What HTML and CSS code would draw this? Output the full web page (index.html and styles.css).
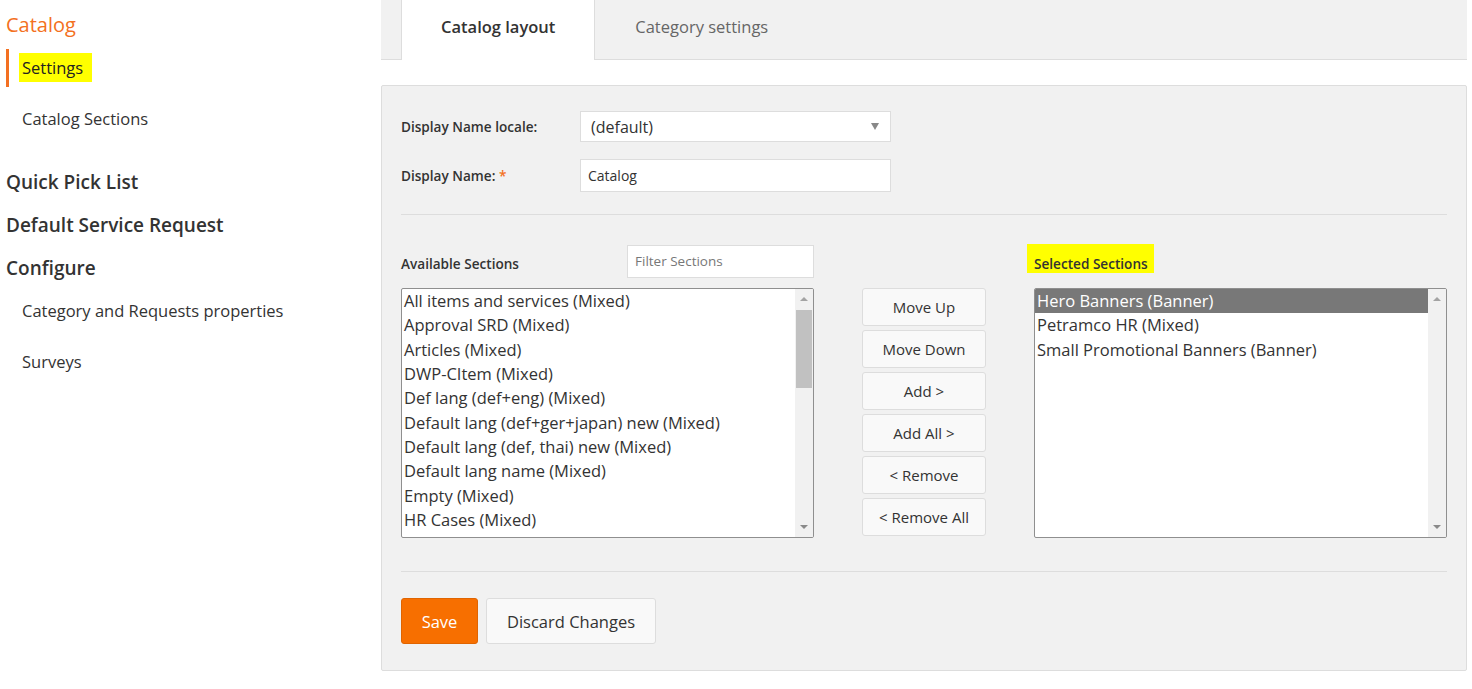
FILE: index.html
```html
<!DOCTYPE html>
<html>
<head>
  <title>Catalog Settings</title>
  <link rel="stylesheet" href="styles.css">
</head>
<body>
  <div class="page">
    <div class="sidebar">
      <div class="nav-group">
        <div class="nav-title current">Catalog</div>
        <div class="nav-list">
          <div class="nav-item active"><span class="marker">Settings</span></div>
          <div class="nav-item">Catalog Sections</div>
        </div>
      </div>
      <div class="nav-group">
        <div class="nav-title">Quick Pick List</div>
      </div>
      <div class="nav-group">
        <div class="nav-title">Default Service Request</div>
      </div>
      <div class="nav-group">
        <div class="nav-title">Configure</div>
        <div class="nav-list">
          <div class="nav-item">Category and Requests properties</div>
          <div class="nav-item">Surveys</div>
        </div>
      </div>
    </div>

    <div class="main">
      <div class="tabs">
        <div class="tab active">Catalog layout</div>
        <div class="tab">Category settings</div>
      </div>

      <div class="panel">
        <div class="form-row">
          <label class="form-label">Display Name locale:</label>
          <div class="select">
            <span>(default)</span>
            <span class="caret"></span>
          </div>
        </div>
        <div class="form-row">
          <label class="form-label">Display Name: <span class="req">*</span></label>
          <div class="text-input">Catalog</div>
        </div>

        <div class="divider"></div>

        <div class="sections">
          <div class="section-head">
            <label class="form-label">Available Sections</label>
            <div class="filter">Filter Sections</div>
          </div>
          <div></div>
          <div class="section-head">
            <label class="form-label"><span class="marker-label">Selected Sections</span></label>
          </div>

          <div class="listbox">
            <ul class="options">
              <li>All items and services (Mixed)</li>
              <li>Approval SRD (Mixed)</li>
              <li>Articles (Mixed)</li>
              <li>DWP-CItem (Mixed)</li>
              <li>Def lang (def+eng) (Mixed)</li>
              <li>Default lang (def+ger+japan) new (Mixed)</li>
              <li>Default lang (def, thai) new (Mixed)</li>
              <li>Default lang name (Mixed)</li>
              <li>Empty (Mixed)</li>
              <li>HR Cases (Mixed)</li>
            </ul>
            <div class="scrollbar">
              <span class="arrow up"></span>
              <span class="thumb"></span>
              <span class="arrow down"></span>
            </div>
          </div>

          <div class="actions">
            <button class="btn-small">Move Up</button>
            <button class="btn-small">Move Down</button>
            <button class="btn-small">Add &gt;</button>
            <button class="btn-small">Add All &gt;</button>
            <button class="btn-small">&lt; Remove</button>
            <button class="btn-small">&lt; Remove All</button>
          </div>

          <div class="listbox">
            <ul class="options">
              <li class="selected">Hero Banners (Banner)</li>
              <li>Petramco HR (Mixed)</li>
              <li>Small Promotional Banners (Banner)</li>
            </ul>
            <div class="scrollbar">
              <span class="arrow up"></span>
              <span class="arrow down"></span>
            </div>
          </div>
        </div>

        <div class="divider bottom"></div>

        <div class="footer">
          <button class="btn-primary">Save</button>
          <button class="btn-default">Discard Changes</button>
        </div>
      </div>
    </div>
  </div>
</body>
</html>
```

FILE: styles.css
```css
body {
  margin: 0;
  font-family: "Open Sans", "Liberation Sans", sans-serif;
  color: #333;
  background-color: #fff;
}

.page {
  display: flex;
}

/* left navigation */
.sidebar {
  width: 375px;
  padding: 10px 0 0 6px;
  flex-shrink: 0;
}

.nav-group + .nav-group {
  margin-top: 13px;
}

.nav-title {
  font-size: 19px;
  font-weight: 600;
  line-height: 30px;
  color: #333;
}

.nav-title.current {
  font-size: 20px;
  color: #f37021;
  font-weight: 500;
}

.nav-list {
  padding: 9px 0 16px;
}

.nav-item {
  height: 38px;
  line-height: 38px;
  font-size: 16.5px;
  padding-left: 16px;
  color: #333;
}

.nav-item + .nav-item {
  margin-top: 13px;
}

.nav-item.active {
  border-left: 3px solid #f37021;
  padding-left: 13px;
  font-weight: 500;
  color: #222;
}

.marker {
  background-color: #ffff00;
  padding: 3px 9px 3px 3px;
  margin-left: -3px;
}

/* main area */
.main {
  flex: 1;
  margin-right: 5px;
}

.tabs {
  display: flex;
  height: 59px;
  padding-left: 20px;
  background-color: #f1f1f1;
  border-bottom: 1px solid #ddd;
}

.tab {
  padding: 0 40px;
  line-height: 54px;
  font-size: 16.5px;
  color: #666;
}

.tab.active {
  height: 60px;
  background-color: #fff;
  border-left: 1px solid #ddd;
  border-right: 1px solid #ddd;
  padding: 0 39px;
  font-weight: 600;
  color: #333;
}

.panel {
  margin-top: 25px;
  background-color: #f1f1f1;
  border: 1px solid #ddd;
  border-radius: 2px;
  padding: 25px 19px 26px;
}

.form-row {
  display: flex;
  align-items: center;
}

.form-row + .form-row {
  margin-top: 17px;
}

.form-label {
  font-size: 13.6px;
  font-weight: 600;
  color: #333;
}

.form-row .form-label {
  width: 179px;
}

.req {
  color: #f37021;
}

.select {
  width: 289px;
  height: 29px;
  padding: 0 10px;
  background-color: #fff;
  border: 1px solid #ddd;
  display: flex;
  align-items: center;
  justify-content: space-between;
  font-size: 16px;
}

.caret {
  width: 0;
  height: 0;
  border-left: 4px solid transparent;
  border-right: 4px solid transparent;
  border-top: 7px solid #888;
  margin-right: 1px;
}

.text-input {
  width: 295px;
  height: 31px;
  line-height: 31px;
  padding: 0 7px;
  background-color: #fff;
  border: 1px solid #ddd;
  font-size: 14px;
}

.divider {
  border-top: 1px solid #ddd;
  margin: 22px 0 30px;
}

.divider.bottom {
  margin: 33px 0 26px;
}

/* dual list */
.sections {
  display: grid;
  grid-template-columns: 413px 1fr 413px;
  row-gap: 10px;
}

.section-head {
  height: 33px;
  display: flex;
  align-items: flex-end;
  justify-content: space-between;
}

.section-head .form-label {
  padding-bottom: 5px;
}

.marker-label {
  display: inline-block;
  background-color: #ffff00;
  padding: 10px 6px 0 7px;
  margin-left: -7px;
}

.filter {
  width: 171px;
  height: 31px;
  line-height: 31px;
  padding: 0 7px;
  background-color: #fff;
  border: 1px solid #ddd;
  font-size: 13.5px;
  color: #777;
}

.listbox {
  height: 248px;
  display: flex;
  background-color: #fff;
  border: 1px solid #8f8f8f;
  border-radius: 2px;
  overflow: hidden;
}

.options {
  flex: 1;
  list-style: none;
  margin: 0;
  padding: 0;
  overflow: hidden;
}

.options li {
  font-size: 16.5px;
  line-height: 24.33px;
  padding-left: 2px;
  white-space: nowrap;
}

.options li.selected {
  background-color: #787878;
  color: #fff;
}

.scrollbar {
  width: 18px;
  background-color: #f1f1f1;
  position: relative;
}

.thumb {
  position: absolute;
  left: 1px;
  right: 1px;
  top: 21px;
  height: 78px;
  background-color: #c1c1c1;
}

.arrow {
  position: absolute;
  left: 5px;
  width: 0;
  height: 0;
  border-left: 4px solid transparent;
  border-right: 4px solid transparent;
}

.arrow.up {
  top: 8px;
  border-bottom: 4px solid #a3a3a3;
}

.arrow.down {
  bottom: 8px;
  border-top: 4px solid #8a8a8a;
}

.actions {
  display: flex;
  flex-direction: column;
  align-items: center;
  gap: 4px;
}

.btn-small {
  width: 124px;
  height: 38px;
  background-color: #f9f9f9;
  border: 1px solid #ddd;
  border-radius: 3px;
  font-family: inherit;
  font-size: 15px;
  color: #333;
  padding: 0;
}

.footer {
  display: flex;
  gap: 8px;
}

.btn-primary {
  width: 77px;
  height: 46px;
  background-color: #f76f00;
  border: 1px solid #e06400;
  border-radius: 3px;
  color: #fff;
  font-family: inherit;
  font-size: 16.5px;
}

.btn-default {
  width: 170px;
  height: 46px;
  background-color: #f9f9f9;
  border: 1px solid #ddd;
  border-radius: 3px;
  color: #333;
  font-family: inherit;
  font-size: 16.5px;
}
```
